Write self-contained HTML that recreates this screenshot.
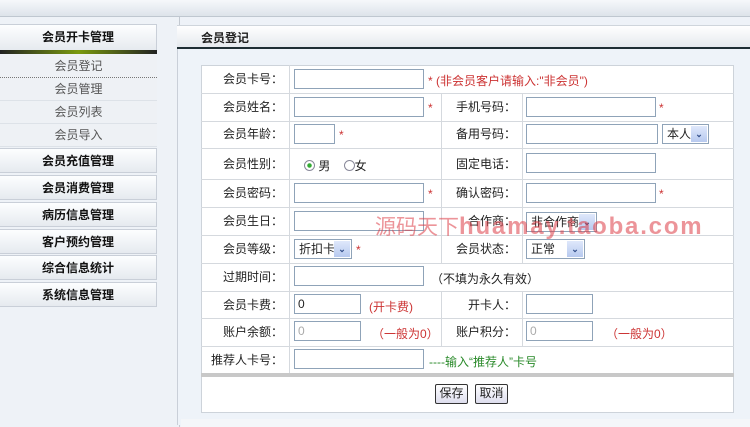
<!DOCTYPE html><html><head><meta charset="utf-8"><style>
*{margin:0;padding:0;box-sizing:border-box}
body{width:750px;height:427px;overflow:hidden;background:#eef2f8;font-family:"Liberation Sans","Noto Sans CJK SC",sans-serif;font-size:12px;color:#222;position:relative}
.a{position:absolute}
.h{position:absolute;left:0;width:157px;height:25px;background:linear-gradient(#fdfeff,#e6eaef);border:1px solid #c9cfd8;border-left:none;font-weight:bold;font-size:12px;text-align:center;line-height:24px;color:#111}
.s{position:absolute;left:0;width:157px;height:23px;text-align:center;line-height:23px;color:#555;border-bottom:1px solid #dde2e8;background:#eef1f5}
.hl{position:absolute;height:1px;background:#d5d9de}
.vl{position:absolute;width:1px;background:#d5d9de}
.l{position:absolute;text-align:right;line-height:14px}
.i{position:absolute;height:20px;border:1px solid #8fa3b8;background:#fff;font-size:12px;line-height:18px;padding-left:3px}
.r{color:#c33}
.sel{position:absolute;height:20px;border:1px solid #8fa3b8;background:#fff;line-height:18px;padding-left:4px}
.sel b{position:absolute;right:1px;top:1px;width:16px;height:16px;background:linear-gradient(#dfe8fb,#b7c9ef);color:#34508a;font-size:9px;text-align:center;line-height:16px}
.btn{position:absolute;height:20px;border:1px solid #333;border-radius:2px;background:linear-gradient(#fff,#dde);line-height:17px;text-align:center}
</style></head><body>
<div class="a" style="left:0;top:0;width:750px;height:17px;background:linear-gradient(#f6f8fb,#dde3ea);border-bottom:1px solid #bfc7d0"></div>
<div class="a" style="left:0;top:17px;width:180px;height:410px;background:#eef2f7;border-right:1px solid #c3c9d1"></div>
<div class="h" style="top:24px;height:27px">会员开卡管理</div>
<div class="a" style="left:0;top:50px;width:157px;height:4px;background:linear-gradient(90deg,#222,#7a9a10 50%,#222)"></div>
<div class="s" style="top:55px;border-bottom:1px dotted #777">会员登记</div>
<div class="s" style="top:78px">会员管理</div>
<div class="s" style="top:101px">会员列表</div>
<div class="s" style="top:124px">会员导入</div>
<div class="h" style="top:148px">会员充值管理</div>
<div class="h" style="top:175px">会员消费管理</div>
<div class="h" style="top:202px">病历信息管理</div>
<div class="h" style="top:229px">客户预约管理</div>
<div class="h" style="top:255px">综合信息统计</div>
<div class="h" style="top:282px">系统信息管理</div>
<div class="a" style="left:177px;top:25px;width:573px;height:400px;background:#eef3f9;border-left:1px solid #c9cfd8"></div>
<div class="a" style="left:177px;top:25px;width:573px;height:24px;background:linear-gradient(#fff,#e5e9ee);border-top:1px solid #cfd5dc;border-bottom:2px solid #1e2e34;font-weight:bold;padding-left:24px;line-height:24px">会员登记</div>
<div class="a" style="left:201px;top:65px;width:533px;height:348px;background:#fff;border:1px solid #cdd3da"></div>
<div class="vl" style="left:289px;top:65px;height:308px"></div>
<div class="vl" style="left:441px;top:93px;height:170px"></div>
<div class="vl" style="left:522px;top:93px;height:170px"></div>
<div class="vl" style="left:441px;top:291px;height:55px"></div>
<div class="vl" style="left:522px;top:291px;height:55px"></div>
<div class="hl" style="left:201px;top:93px;width:533px"></div>
<div class="hl" style="left:201px;top:121px;width:533px"></div>
<div class="hl" style="left:201px;top:148px;width:533px"></div>
<div class="hl" style="left:201px;top:179px;width:533px"></div>
<div class="hl" style="left:201px;top:207px;width:533px"></div>
<div class="hl" style="left:201px;top:235px;width:533px"></div>
<div class="hl" style="left:201px;top:263px;width:533px"></div>
<div class="hl" style="left:201px;top:291px;width:533px"></div>
<div class="hl" style="left:201px;top:318px;width:533px"></div>
<div class="hl" style="left:201px;top:346px;width:533px"></div>
<div class="a" style="left:201px;top:373px;width:533px;height:4px;background:#c8c8c8"></div>

<div class="l" style="left:200px;width:83px;top:72px">会员卡号：</div>
<div class="l" style="left:200px;width:83px;top:100px">会员姓名：</div>
<div class="l" style="left:200px;width:83px;top:127px">会员年龄：</div>
<div class="l" style="left:200px;width:83px;top:157px">会员性别：</div>
<div class="l" style="left:200px;width:83px;top:186px">会员密码：</div>
<div class="l" style="left:200px;width:83px;top:214px">会员生日：</div>
<div class="l" style="left:200px;width:83px;top:242px">会员等级：</div>
<div class="l" style="left:200px;width:83px;top:270px">过期时间：</div>
<div class="l" style="left:200px;width:83px;top:298px">会员卡费：</div>
<div class="l" style="left:200px;width:83px;top:325px">账户余额：</div>
<div class="l" style="left:200px;width:83px;top:353px">推荐人卡号：</div>

<div class="l" style="left:440px;width:76px;top:100px">手机号码：</div>
<div class="l" style="left:440px;width:76px;top:127px">备用号码：</div>
<div class="l" style="left:440px;width:76px;top:157px">固定电话：</div>
<div class="l" style="left:440px;width:76px;top:186px">确认密码：</div>
<div class="l" style="left:440px;width:76px;top:214px">合作商：</div>
<div class="l" style="left:440px;width:76px;top:242px">会员状态：</div>
<div class="l" style="left:440px;width:76px;top:298px">开卡人：</div>
<div class="l" style="left:440px;width:76px;top:325px">账户积分：</div>

<div class="i" style="left:294px;top:69px;width:130px"></div>
<div class="a r" style="left:428px;top:72px">* (非会员客户请输入:"非会员")</div>
<div class="i" style="left:294px;top:97px;width:130px"></div><div class="a r" style="left:428px;top:101px">*</div>
<div class="i" style="left:294px;top:124px;width:41px"></div><div class="a r" style="left:339px;top:128px">*</div>
<div class="a" style="left:304px;top:157px"><span style="display:inline-block;width:11px;height:11px;border:1px solid #889;border-radius:50%;background:radial-gradient(#3a3 30%,#fff 40%);vertical-align:-1px"></span> 男 &nbsp;&nbsp;&nbsp;<span style="display:inline-block;width:11px;height:11px;border:1px solid #889;border-radius:50%;vertical-align:-1px"></span>女</div>
<div class="i" style="left:294px;top:183px;width:130px"></div><div class="a r" style="left:428px;top:187px">*</div>
<div class="i" style="left:294px;top:211px;width:130px"></div>
<div class="sel" style="left:294px;top:239px;width:58px">折扣卡<b>⌄</b></div><div class="a r" style="left:356px;top:243px">*</div>
<div class="i" style="left:294px;top:266px;width:130px"></div>
<div class="a" style="left:431px;top:270px">（不填为永久有效）</div>
<div class="i" style="left:294px;top:294px;width:67px">0</div>
<div class="a r" style="left:369px;top:298px">(开卡费)</div>
<div class="i" style="left:294px;top:321px;width:67px;color:#aaa">0</div>
<div class="a r" style="left:372px;top:325px">（一般为0）</div>
<div class="i" style="left:294px;top:349px;width:130px"></div>
<div class="a" style="left:429px;top:353px;color:#2a8a2a">----输入“推荐人”卡号</div>

<div class="i" style="left:526px;top:97px;width:130px"></div><div class="a r" style="left:659px;top:101px">*</div>
<div class="i" style="left:526px;top:124px;width:132px"></div>
<div class="sel" style="left:662px;top:124px;width:47px">本人<b>⌄</b></div>
<div class="i" style="left:526px;top:153px;width:130px"></div>
<div class="i" style="left:526px;top:183px;width:130px"></div><div class="a r" style="left:659px;top:187px">*</div>
<div class="sel" style="left:526px;top:212px;width:71px">非合作商<b>⌄</b></div>
<div class="sel" style="left:526px;top:239px;width:59px">正常<b>⌄</b></div>
<div class="i" style="left:526px;top:294px;width:67px"></div>
<div class="i" style="left:526px;top:321px;width:67px;color:#aaa">0</div>
<div class="a r" style="left:606px;top:325px">（一般为0）</div>

<div class="btn" style="left:435px;top:384px;width:33px">保存</div>
<div class="btn" style="left:475px;top:384px;width:33px">取消</div>
<div class="a" style="left:375px;top:213px;font-size:21px;color:rgba(220,60,70,0.55);white-space:nowrap;line-height:28px">源码天下<span style="font-weight:bold;font-size:24px;letter-spacing:1.8px">huamay.taoba.com</span></div>
<div class="a" style="left:181px;top:419px;width:569px;height:8px;background:#f4f6f9"></div>
</body></html>
